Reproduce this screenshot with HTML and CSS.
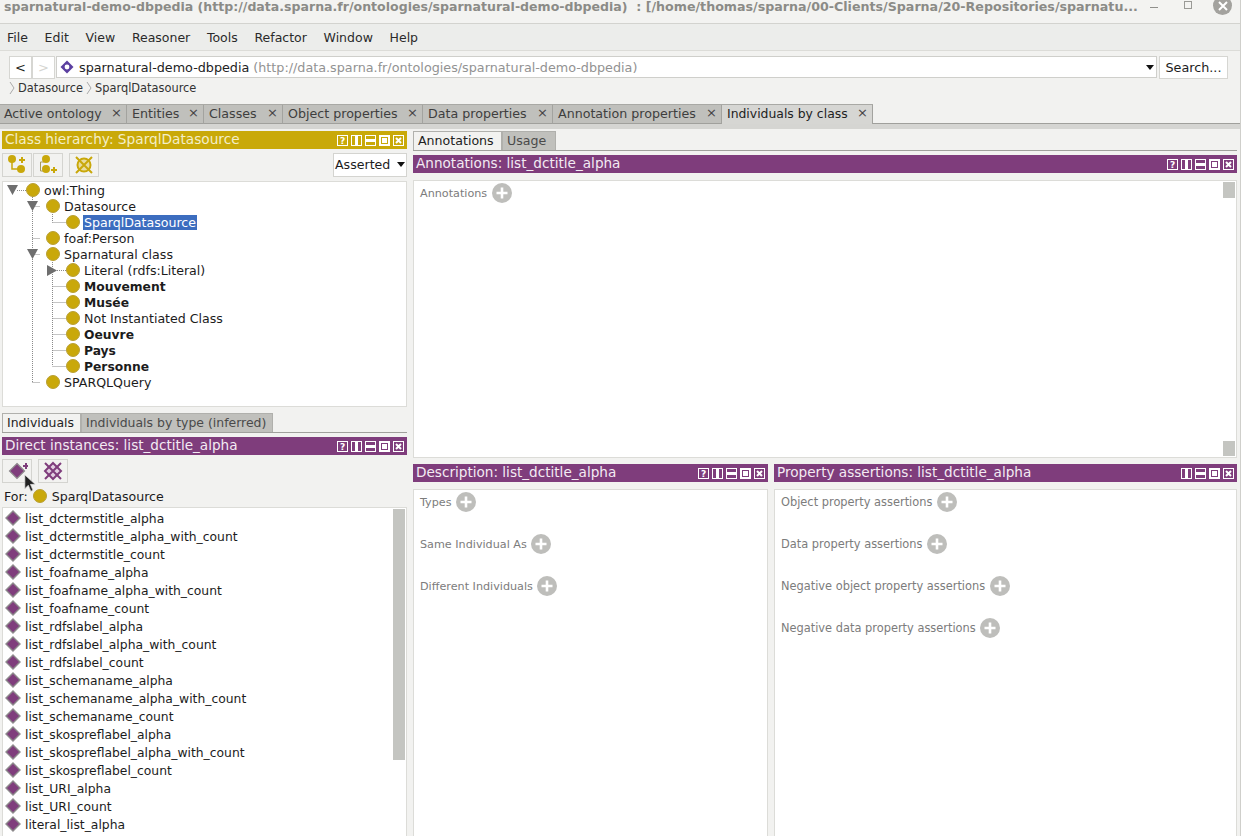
FILE: index.html
```html
<!DOCTYPE html>
<html lang="en">
<head>
<meta charset="utf-8">
<title>Protégé</title>
<link rel="stylesheet" href="styles.css">
</head>
<body>
<svg class="defs" width="0" height="0" aria-hidden="true">
  <symbol id="b-help" viewBox="0 0 11 11"><rect x=".5" y=".5" width="10" height="10" fill="none" stroke="#fff"/><text x="5.5" y="9" font-size="9" font-weight="700" text-anchor="middle" fill="#fff" font-family="DejaVu Sans">?</text></symbol>
  <symbol id="b-cols" viewBox="0 0 11 11"><rect x=".5" y=".5" width="10" height="10" fill="none" stroke="#fff"/><rect x="4" y="1" width="3" height="9" fill="#fff"/></symbol>
  <symbol id="b-rows" viewBox="0 0 11 11"><rect x=".5" y=".5" width="10" height="10" fill="none" stroke="#fff"/><rect x="1" y="4" width="9" height="3" fill="#fff"/></symbol>
  <symbol id="b-max" viewBox="0 0 11 11"><rect x="1" y="1" width="9" height="9" fill="none" stroke="#fff" stroke-width="2"/><rect x="3" y="3" width="5" height="5" fill="#fff"/></symbol>
  <symbol id="b-close" viewBox="0 0 11 11"><rect x=".5" y=".5" width="10" height="10" fill="none" stroke="#fff"/><path d="M3 3l5 5M8 3l-5 5" stroke="#fff" stroke-width="2"/></symbol>
  <symbol id="diamond" viewBox="0 0 16 16"><path d="M8 1L15 8 8 15 1 8z" fill="#7f3d7c" stroke="#8d8a8c" stroke-width="1.4"/></symbol>
  <symbol id="plus" viewBox="0 0 20 20"><circle cx="10" cy="10" r="10" fill="#bebebb"/><path d="M10 4.500v11M4.500 10h11" stroke="#fff" stroke-width="2.600"/></symbol>
</svg>

<div class="window">
  <header class="titlebar">
    <span class="title"><span class="title-name">sparnatural-demo-dbpedia (http://data.sparna.fr/ontologies/sparnatural-demo-dbpedia)</span><span class="title-path">  : [/home/thomas/sparna/00-Clients/Sparna/20-Repositories/sparnatu...</span></span>
    <span class="win-min"></span>
    <span class="win-max"></span>
    <span class="win-close"><svg width="12" height="12" viewBox="0 0 12 12"><path d="M2 2l8 8M10 2l-8 8" stroke="#fff" stroke-width="2"/></svg></span>
  </header>

  <nav class="menubar">
    <span>File</span><span>Edit</span><span>View</span><span>Reasoner</span><span>Tools</span><span>Refactor</span><span>Window</span><span>Help</span>
  </nav>

  <div class="addressbar">
    <span class="nav-btn">&lt;</span>
    <span class="nav-btn off">&gt;</span>
    <div class="combo">
      <svg class="onto" width="14" height="14" viewBox="0 0 14 14"><path d="M7 .5L13.500 7 7 13.500.5 7z" fill="#5b3fa0"/><circle cx="7" cy="7" r="2.400" fill="#fff"/></svg>
      <span class="combo-name">sparnatural-demo-dbpedia</span>
      <span class="combo-iri">(http://data.sparna.fr/ontologies/sparnatural-demo-dbpedia)</span>
      <span class="caret"></span>
    </div>
    <span class="search">Search...</span>
  </div>

  <div class="crumbs">
    <svg class="chev" width="6" height="14" viewBox="0 0 6 14"><path d="M1 1l4 6-4 6" fill="none" stroke="#aaa"/></svg>
    <span>Datasource</span>
    <svg class="chev" width="6" height="14" viewBox="0 0 6 14"><path d="M1 1l4 6-4 6" fill="none" stroke="#aaa"/></svg>
    <span>SparqlDatasource</span>
  </div>

  <div class="maintabs">
    <span class="mtab w1">Active ontology<i>×</i></span>
    <span class="mtab w2">Entities<i>×</i></span>
    <span class="mtab w3">Classes<i>×</i></span>
    <span class="mtab w4">Object properties<i>×</i></span>
    <span class="mtab w5">Data properties<i>×</i></span>
    <span class="mtab w6">Annotation properties<i>×</i></span>
    <span class="mtab w7 active">Individuals by class<i>×</i></span>
  </div>
  <div class="band"></div>

  <main class="workspace">
    <section class="leftcol">
      <div class="viewhead gold">
        <span>Class hierarchy: SparqlDatasource</span>
        <span class="viewbtns"><svg><use href="#b-help"/></svg><svg><use href="#b-cols"/></svg><svg><use href="#b-rows"/></svg><svg><use href="#b-max"/></svg><svg><use href="#b-close"/></svg></span>
      </div>
      <div class="toolbar">
        <span class="tool">
          <svg width="22" height="22" viewBox="0 0 22 22"><path d="M6 6v9h8" fill="none" stroke="#c9a80a" stroke-width="1.500"/><circle cx="6" cy="5" r="4" fill="#c9a80a"/><circle cx="15" cy="15" r="4" fill="#c9a80a"/><path d="M16 3v6M13 6h6" stroke="#c9a80a" stroke-width="2"/></svg>
        </span>
        <span class="tool">
          <svg width="22" height="22" viewBox="0 0 22 22"><path d="M7 8H3.500v9H6" fill="none" stroke="#a89a5a"/><circle cx="9" cy="5" r="4" fill="#c9a80a"/><circle cx="9" cy="15" r="4" fill="#c9a80a"/><path d="M17 13v6M14 16h6" stroke="#c9a80a" stroke-width="2"/></svg>
        </span>
        <span class="tool gap">
          <svg width="22" height="22" viewBox="0 0 22 22"><circle cx="11" cy="11" r="6.500" fill="#e8dda0" stroke="#c9a80a" stroke-width="2"/><path d="M3 3l16 16M19 3L3 19" stroke="#c9a80a" stroke-width="2"/></svg>
        </span>
        <span class="select">Asserted<span class="caret"></span></span>
      </div>
      <div class="panel tree">
        <svg class="treelines" viewBox="3 182 404 224" aria-hidden="true">
          <g stroke="#8a8a8a" stroke-dasharray="1 1" fill="none">
            <path d="M17 190.500h9M32.500 197V382M32.500 206.500h8M32.500 238.500h8M32.500 254.500h8M32.500 382.500h8M52.500 214v8.500M52.500 222.500h14M52.500 262V366M57 270.500h9M52.500 286.500h14M52.500 302.500h14M52.500 318.500h14M52.500 334.500h14M52.500 350.500h14M52.500 366.500h14"/>
          </g>
          <g fill="#6e6e6e">
            <path d="M7 185h11l-5.500 10zM27 201h11l-5.500 10zM27 249h11l-5.500 10zM47 265v11l10-5.500z"/>
          </g>
        </svg>
        <div class="node l1"><b class="dot"></b><span>owl:Thing</span></div>
        <div class="node l2"><b class="dot"></b><span>Datasource</span></div>
        <div class="node l3"><b class="dot"></b><span class="sel">SparqlDatasource</span></div>
        <div class="node l2"><b class="dot"></b><span>foaf:Person</span></div>
        <div class="node l2"><b class="dot"></b><span>Sparnatural class</span></div>
        <div class="node l3"><b class="dot"></b><span>Literal (rdfs:Literal)</span></div>
        <div class="node l3 strong"><b class="dot"></b><span>Mouvement</span></div>
        <div class="node l3 strong"><b class="dot"></b><span>Musée</span></div>
        <div class="node l3"><b class="dot"></b><span>Not Instantiated Class</span></div>
        <div class="node l3 strong"><b class="dot"></b><span>Oeuvre</span></div>
        <div class="node l3 strong"><b class="dot"></b><span>Pays</span></div>
        <div class="node l3 strong"><b class="dot"></b><span>Personne</span></div>
        <div class="node l2"><b class="dot"></b><span>SPARQLQuery</span></div>
      </div>

      <div class="subtabs lower">
        <span class="stab active st1">Individuals</span>
        <span class="stab st2">Individuals by type (inferred)</span>
      </div>
      <div class="viewhead purple">
        <span>Direct instances: list_dctitle_alpha</span>
        <span class="viewbtns"><svg><use href="#b-help"/></svg><svg><use href="#b-cols"/></svg><svg><use href="#b-rows"/></svg><svg><use href="#b-max"/></svg><svg><use href="#b-close"/></svg></span>
      </div>
      <div class="toolbar">
        <span class="tool">
          <svg width="22" height="22" viewBox="0 0 22 22"><path d="M11 3.500l7.500 7.500-7.500 7.500L3.500 11z" fill="#7f3d7c" stroke="#8d8a8c" stroke-width="1.200"/><path d="M20 3v6M17 6h6" stroke="#7f3d7c" stroke-width="2"/></svg>
        </span>
        <span class="tool gap">
          <svg width="22" height="22" viewBox="0 0 22 22"><path d="M11 3l8 8-8 8-8-8z" fill="#e2cfe1"/><path d="M11 3l8 8-8 8-8-8z" fill="none" stroke="#7f3d7c" stroke-width="2"/><path d="M3 3l16 16M19 3L3 19" stroke="#7f3d7c" stroke-width="2"/></svg>
        </span>
      </div>
      <div class="forline">For: <b class="dot"></b><span>SparqlDatasource</span></div>
      <div class="panel list">
        <div class="thumb list-thumb"></div>
        <div class="item"><svg><use href="#diamond"/></svg>list_dctermstitle_alpha</div>
        <div class="item"><svg><use href="#diamond"/></svg>list_dctermstitle_alpha_with_count</div>
        <div class="item"><svg><use href="#diamond"/></svg>list_dctermstitle_count</div>
        <div class="item"><svg><use href="#diamond"/></svg>list_foafname_alpha</div>
        <div class="item"><svg><use href="#diamond"/></svg>list_foafname_alpha_with_count</div>
        <div class="item"><svg><use href="#diamond"/></svg>list_foafname_count</div>
        <div class="item"><svg><use href="#diamond"/></svg>list_rdfslabel_alpha</div>
        <div class="item"><svg><use href="#diamond"/></svg>list_rdfslabel_alpha_with_count</div>
        <div class="item"><svg><use href="#diamond"/></svg>list_rdfslabel_count</div>
        <div class="item"><svg><use href="#diamond"/></svg>list_schemaname_alpha</div>
        <div class="item"><svg><use href="#diamond"/></svg>list_schemaname_alpha_with_count</div>
        <div class="item"><svg><use href="#diamond"/></svg>list_schemaname_count</div>
        <div class="item"><svg><use href="#diamond"/></svg>list_skospreflabel_alpha</div>
        <div class="item"><svg><use href="#diamond"/></svg>list_skospreflabel_alpha_with_count</div>
        <div class="item"><svg><use href="#diamond"/></svg>list_skospreflabel_count</div>
        <div class="item"><svg><use href="#diamond"/></svg>list_URI_alpha</div>
        <div class="item"><svg><use href="#diamond"/></svg>list_URI_count</div>
        <div class="item"><svg><use href="#diamond"/></svg>literal_list_alpha</div>
      </div>
    </section>

    <section class="rightcol">
      <div class="subtabs">
        <span class="stab active st3">Annotations</span>
        <span class="stab st4">Usage</span>
      </div>
      <div class="viewhead purple">
        <span>Annotations: list_dctitle_alpha</span>
        <span class="viewbtns"><svg><use href="#b-help"/></svg><svg><use href="#b-cols"/></svg><svg><use href="#b-rows"/></svg><svg><use href="#b-max"/></svg><svg><use href="#b-close"/></svg></span>
      </div>
      <div class="panel annot">
        <div class="thumb t-top"></div>
        <div class="thumb t-bottom"></div>
        <div class="prop"><span>Annotations</span><svg><use href="#plus"/></svg></div>
      </div>
      <div class="bottomrow">
        <div class="desc">
          <div class="viewhead purple">
            <span>Description: list_dctitle_alpha</span>
            <span class="viewbtns"><svg><use href="#b-help"/></svg><svg><use href="#b-cols"/></svg><svg><use href="#b-rows"/></svg><svg><use href="#b-max"/></svg><svg><use href="#b-close"/></svg></span>
          </div>
          <div class="panel props">
            <div class="prop"><span>Types</span><svg><use href="#plus"/></svg></div>
            <div class="prop"><span>Same Individual As</span><svg><use href="#plus"/></svg></div>
            <div class="prop"><span>Different Individuals</span><svg><use href="#plus"/></svg></div>
          </div>
        </div>
        <div class="assert">
          <div class="viewhead purple">
            <span>Property assertions: list_dctitle_alpha</span>
            <span class="viewbtns"><svg><use href="#b-cols"/></svg><svg><use href="#b-rows"/></svg><svg><use href="#b-max"/></svg><svg><use href="#b-close"/></svg></span>
          </div>
          <div class="panel props">
            <div class="prop"><span>Object property assertions</span><svg><use href="#plus"/></svg></div>
            <div class="prop"><span>Data property assertions</span><svg><use href="#plus"/></svg></div>
            <div class="prop"><span>Negative object property assertions</span><svg><use href="#plus"/></svg></div>
            <div class="prop"><span>Negative data property assertions</span><svg><use href="#plus"/></svg></div>
          </div>
        </div>
      </div>
    </section>
  </main>

  <svg class="cursor" width="12" height="19" viewBox="0 0 14 22" aria-hidden="true"><path d="M1 1v16l4-4 3 7 2.500-1-3-7h5.500z" fill="#222" stroke="#ddd" stroke-width=".8"/></svg>
</div>
</body>
</html>
```
FILE: styles.css
```css
* { box-sizing: border-box; }
html, body { margin: 0; height: 100%; }
body {
  width: 1242px;
  height: 836px;
  overflow: hidden;
  background: #fff;
  font-family: "DejaVu Sans", sans-serif;
  font-size: 12.6px;
  color: #1c1c1c;
}
.defs { position: absolute; }
.window {
  position: relative;
  width: 1241px;
  height: 836px;
  overflow: hidden;
  background: #f2f2f0;
  border-right: 1px solid #cfcfcb;
}

/* title bar */
.titlebar {
  display: flex;
  height: 24px;
  padding-left: 4px;
  background: #f3f3f1;
  border-bottom: 1px solid #d3d3cf;
  overflow: hidden;
}
.title {
  width: 1136px;
  flex: none;
  font-weight: 700;
  line-height: 14px;
  color: #8b8b87;
  white-space: pre;
}
.title-name { font-size: 12.550px; }
.title-path { font-size: 12.650px; }
.win-min {
  width: 8px; height: 1px;
  margin: 7px 0 0 10px;
  background: #8f8f8b;
}
.win-max {
  width: 8px; height: 8px;
  margin: 1px 0 0 26px;
  border: 1px solid #9a9a96;
}
.win-close {
  display: flex; align-items: center; justify-content: center;
  width: 19px; height: 19px;
  margin: -4px 0 0 21px;
  border-radius: 50%;
  background: #a3a29e;
}

/* menu */
.menubar {
  display: flex;
  gap: 16.700px;
  align-items: center;
  height: 27px;
  padding: 0 0 0 7px;
  background: #ecedeb;
  border-bottom: 1px solid #dcdcd8;
  font-size: 12.500px;
  color: #2a2a2a;
}

/* address */
.addressbar {
  display: flex;
  align-items: flex-start;
  height: 29px;
  padding: 5px 0 0 9px;
  font-size: 12.750px;
}
.nav-btn {
  display: flex; align-items: center; justify-content: center;
  width: 23px; height: 23px;
  background: #fff;
  border: 1px solid #d6d6d2;
  font-size: 13px;
}
.nav-btn.off { color: #d5d5d1; margin-right: 1px; }
.combo {
  position: relative;
  display: flex;
  align-items: center;
  width: 1101px; height: 22px;
  padding-left: 3px;
  background: #fff;
  border: 1px solid #cfcfcb;
}
.onto { margin-right: 5px; }
.combo-name { color: #222; }
.combo-iri { margin-left: 4px; color: #929292; }
.caret {
  width: 0; height: 0;
  border-left: 4px solid transparent;
  border-right: 4px solid transparent;
  border-top: 5px solid #111;
}
.combo .caret { margin-left: auto; margin-right: 2px; }
.search {
  display: flex; align-items: center; justify-content: center;
  width: 69px; height: 23px;
  margin-left: 2px;
  background: #fff;
  border: 1px solid #d6d6d2;
}

/* breadcrumb */
.crumbs {
  display: flex;
  align-items: center;
  gap: 3px;
  height: 15px;
  padding-left: 9px;
  font-size: 11.400px;
  color: #333;
}
.chev { flex: none; }

/* main tabs */
.maintabs {
  display: flex;
  height: 20px;
  margin-top: 9px;
  background: #bcbcb8;
  border-top: 1px solid #a9a9a5;
}
.mtab {
  position: relative;
  display: flex;
  align-items: center;
  flex: none;
  height: 19px;
  padding: 0 0 2px 5px;
  background: #c0c0bc;
  border-right: 1px solid #a3a39f;
  border-bottom: 1px solid #a0a09c;
  color: #3e3e3e;
  font-size: 12.650px;
}
.mtab i {
  position: absolute;
  right: 4px; top: 0;
  font-style: normal;
  font-size: 13px;
  line-height: 15px;
  color: #444;
}
.w1 { width: 127px; padding-left: 4px; font-size: 12.550px; }
.w2 { width: 77px; }
.w3 { width: 79px; }
.w4 { width: 140px; }
.w5 { width: 130px; }
.w6 { width: 169px; }
.w7 { width: 151px; }
.mtab.active {
  background: #d6d6d3;
  border-bottom: 0;
  color: #222;
  font-size: 12.400px;
}
.maintabs::after {
  content: "";
  flex: 1;
  background: #f2f2f0;
  border-bottom: 1px solid #a0a09c;
  margin-top: -1px;
}
.band { height: 5px; background: #d5d5d2; }

/* workspace */
.workspace {
  display: flex;
  gap: 6px;
  padding: 2px 0 0 2px;
}
.leftcol { width: 405px; flex: none; }
.rightcol { width: 824px; flex: none; }

.viewhead {
  display: flex;
  justify-content: space-between;
  align-items: center;
  height: 18px;
  padding: 0 3px 3px;
  font-size: 13.600px;
  color: #fff;
  white-space: nowrap;
}
.gold { background: #c9a909; color: #f4efc8; }
.gold > span:first-child { font-size: 13.700px; }
.purple { background: #7f3d7c; color: #f3ebf3; }
.viewbtns { display: flex; gap: 3px; margin-top: 3px; }
.viewbtns svg { width: 11px; height: 11px; display: block; }

.toolbar {
  display: flex;
  align-items: flex-start;
  height: 32px;
  padding-top: 4px;
}
.tool {
  display: flex; align-items: center; justify-content: center;
  width: 30px; height: 24px;
  margin-right: 1px;
  border: 1px solid #d4d4d0;
  background: #f2f2f0;
}
.tool.gap { margin-left: 5px; }
.select {
  display: flex;
  align-items: center;
  justify-content: space-between;
  width: 74px; height: 24px;
  margin-left: auto;
  padding: 0 1px 2px;
  background: #fff;
  border: 1px solid #d4d4d0;
}

.panel {
  position: relative;
  background: #fff;
  border: 1px solid #dcdcd8;
}
.tree { height: 226px; }
.treelines {
  position: absolute;
  left: 0; top: 0;
  width: 404px; height: 224px;
}
.node {
  position: relative;
  display: flex;
  align-items: center;
  gap: 4px;
  height: 16px;
}
.l1 { padding-left: 23px; }
.l2 { padding-left: 43px; }
.l3 { padding-left: 63px; }
.strong { font-weight: 700; font-size: 12.300px; }
.strong span { padding-top: 1px; }
.dot {
  display: block;
  flex: none;
  width: 14px; height: 14px;
  border-radius: 50%;
  background: #c9a80a;
  border: 1px solid #b9a035;
}
.sel {
  margin-left: -1px;
  padding: 0 1px;
  background: #3c6dbf;
  color: #fff;
}

.subtabs {
  display: flex;
  height: 20px;
  border-bottom: 1px solid #a0a09c;
}
.subtabs.lower { margin-top: 6px; }
.stab {
  display: flex; align-items: center;
  flex: none;
  height: 19px;
  padding: 0 0 1px 4px;
  background: #c0c0bc;
  border: 1px solid #b0b0ac;
  border-bottom: 0;
  color: #4a4a4a;
  font-size: 12.450px;
}
.stab.active { background: #f2f2f0; color: #222; }
.st1 { width: 79px; }
.st2 { width: 192px; }
.st3 { width: 89px; font-size: 12.600px; }
.st4 { width: 54px; font-size: 12.600px; }
.subtabs + .viewhead { margin-top: 4px; }

.forline {
  display: flex;
  align-items: center;
  height: 18px;
  margin-bottom: 2px;
  padding-left: 2px;
  gap: 5px;
}
.list { height: 340px; padding-top: 2px; overflow: hidden; font-size: 12.350px; }
.item {
  display: flex;
  align-items: center;
  gap: 4px;
  height: 18px;
  padding-left: 2px;
}
.item svg { width: 16px; height: 16px; flex: none; margin-bottom: 2px; }
.thumb { position: absolute; background: #c4c5c1; }
.list-thumb { left: 390px; top: 1px; width: 12px; height: 251px; }
.t-top { right: 1px; top: 1px; width: 12px; height: 16px; }
.t-bottom { right: 1px; bottom: 1px; width: 12px; height: 15px; }

.annot { height: 278px; margin-top: 7px; padding: 2px 6px; }
.prop {
  display: flex;
  align-items: center;
  gap: 4.500px;
  height: 20px;
  font-size: 11.400px;
  color: #7c7c7c;
}
.annot .prop span, .desc .prop span { padding-top: 1px; }
.annot .prop, .desc .prop { font-size: 11.200px; }
.prop svg { width: 20px; height: 20px; flex: none; }

.bottomrow {
  display: flex;
  gap: 6px;
  margin-top: 6px;
}
.desc { width: 355px; flex: none; }
.assert { flex: 1; min-width: 0; }
.props {
  height: 360px;
  margin-top: 7px;
  padding: 2px 6px;
  display: flex;
  flex-direction: column;
  gap: 22px;
}
.cursor {
  position: absolute;
  left: 24px; top: 474px;
}
```
